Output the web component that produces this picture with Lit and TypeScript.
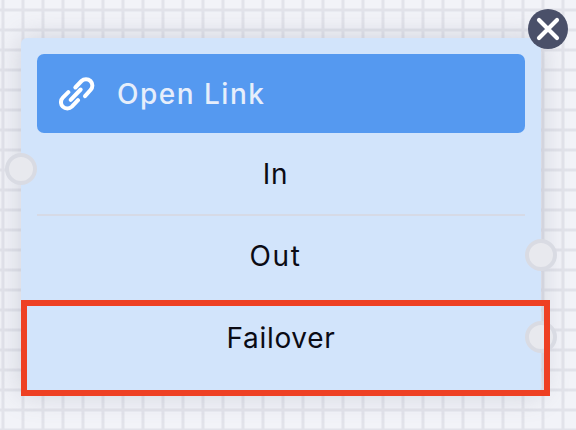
import { LitElement, html, css } from "lit";
import { customElement } from "lit/decorators.js";

@customElement("app-root")
export class AppRoot extends LitElement {
  static styles = css`
    :host { display: block; width: 576px; height: 430px; overflow: hidden; }
    .canvas {
      box-sizing: border-box; width: 576px; height: 430px; padding: 38px 35px 0 21px;
      background-color: #f2f3f8;
      background-image:
        linear-gradient(90deg, transparent 0.5px, #e2e3ea 2.5px, #e2e3ea 3.5px, transparent 5.5px),
        linear-gradient(180deg, transparent 7.5px, #e2e3ea 9.5px, #e2e3ea 10.5px, transparent 12.5px);
      background-size: 20px 20px;
      font-family: "Inter", "Liberation Sans", sans-serif;
    }
    .card {
      position: relative; box-sizing: border-box; width: 520px; height: 356px; padding: 16px;
      background: #d2e4fb; border-radius: 6px;
      box-shadow: 0 0 28px rgba(120,125,150,.3);
    }
    .open {
      display: flex; align-items: center; gap: 20px; height: 79px; padding-left: 22px; box-sizing: border-box;
      background: #5599f0; border-radius: 7px; color: #e6eefb; font-size: 28px; font-weight: 500; letter-spacing: 1.5px;
    }
    .open svg { width: 38px; height: 38px; flex: none; }
    .row { display: flex; align-items: center; justify-content: center; height: 82px; font-size: 28px; letter-spacing: .7px; color: #0b0b14; }
    .row.in { height: 81px; border-bottom: 2px solid #d6dae6; box-sizing: content-box; margin-bottom: -1px; }
    .row.shift { padding-right: 11px; }
    .row.out { letter-spacing: 1.7px; }
    .port { position: absolute; box-sizing: border-box; width: 32px; height: 32px; border-radius: 50%; background: #e8e9ee; border: 4px solid #d9dbe3; }
    .p1 { left: -16px; top: 115px; }
    .p2 { right: -16px; top: 201px; }
    .p3 { right: -16px; top: 283px; }
    .close { position: absolute; right: -27px; top: -29px; width: 40px; height: 40px; border-radius: 50%; background: #4a5069; display: flex; align-items: center; justify-content: center; }
    .close svg { width: 24px; height: 24px; }
    .frame { position: absolute; left: 0; top: 262px; width: 529px; height: 96px; box-sizing: border-box; border: 6px solid #ee4023; }
  `;

  render() {
    return html`<div class="canvas">
      <div class="card">
        <div class="open">
          <svg viewBox="27 28.5 114 114" fill="none" stroke="#fff" stroke-width="12" stroke-linecap="round" stroke-linejoin="round">
            <path d="M62 103 92 72"/>
            <path d="M76 66 94.5 46.5a19 19 0 0 1 27 27L105 92"/>
            <path d="M84 104 65.5 123.5a19 19 0 0 1-27-27L55 80"/>
          </svg>
          <span>Open Link</span>
        </div>
        <div class="row in shift"><span>In</span></div>
        <div class="row out shift"><span>Out</span></div>
        <div class="row"><span>Failover</span></div>
        <div class="port p1"></div>
        <div class="port p2"></div>
        <div class="port p3"></div>
        <div class="frame"></div>
        <div class="close">
          <svg viewBox="0 0 24 24" fill="none" stroke="#fff" stroke-width="4.2" stroke-linecap="round"><path d="M3 3 21 21M21 3 3 21"/></svg>
        </div>
      </div>
    </div>`;
  }
}
